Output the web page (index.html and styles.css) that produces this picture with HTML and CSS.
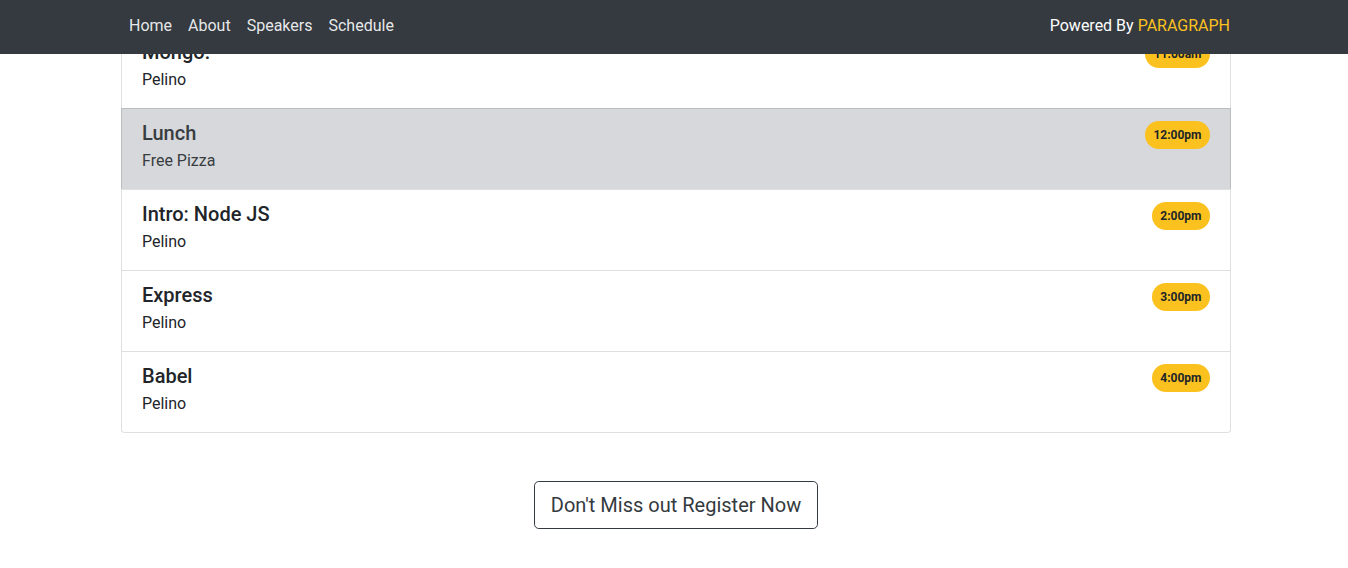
FILE: index.html
```html
<!DOCTYPE html>
<html lang="en">
<head>
<meta charset="utf-8">
<title>Schedule</title>
<link rel="stylesheet" href="styles.css">
</head>
<body>
<nav class="navbar">
  <div class="container nav-inner">
    <ul class="nav-links">
      <li><a href="#">Home</a></li>
      <li><a href="#">About</a></li>
      <li><a href="#">Speakers</a></li>
      <li><a href="#">Schedule</a></li>
    </ul>
    <span class="powered">Powered By <span class="brand">PARAGRAPH</span></span>
  </div>
</nav>
<main class="container main">
  <ul class="list-group">
    <li class="item">
      <div class="item-head"><h5>Mongo:</h5><span class="badge">11:00am</span></div>
      <p>Pelino</p>
    </li>
    <li class="item item-secondary">
      <div class="item-head"><h5>Lunch</h5><span class="badge">12:00pm</span></div>
      <p>Free Pizza</p>
    </li>
    <li class="item">
      <div class="item-head"><h5>Intro: Node JS</h5><span class="badge">2:00pm</span></div>
      <p>Pelino</p>
    </li>
    <li class="item">
      <div class="item-head"><h5>Express</h5><span class="badge">3:00pm</span></div>
      <p>Pelino</p>
    </li>
    <li class="item">
      <div class="item-head"><h5>Babel</h5><span class="badge">4:00pm</span></div>
      <p>Pelino</p>
    </li>
  </ul>
  <div class="cta">
    <a class="btn-outline" href="#">Don't Miss out Register Now</a>
  </div>
</main>
</body>
</html>
```
FILE: styles.css
```css
* { box-sizing: border-box; }
html, body { margin: 0; padding: 0; }
body {
  font-family: Roboto, "Liberation Sans", Arial, sans-serif;
  font-size: 16px;
  line-height: 1.5;
  color: #212529;
  background: #fff;
}
.container {
  width: 1110px;
  margin-left: calc(50% - 553px);
}
.navbar {
  position: fixed;
  top: 0;
  left: 0;
  right: 0;
  height: 54px;
  background: #343a40;
  z-index: 10;
}
.nav-inner {
  display: flex;
  justify-content: space-between;
  align-items: flex-start;
  padding-top: 14px;
}
.nav-links {
  list-style: none;
  margin: 0;
  padding: 0;
  display: flex;
}
.nav-links a {
  display: block;
  padding: 0 8px;
  color: rgba(255, 255, 255, 0.9);
  text-decoration: none;
}
.powered { color: #fff; padding-right: 1px; }
.brand { color: #fbc11f; }

.main { padding-top: 27px; padding-bottom: 39px; }
.list-group {
  list-style: none;
  margin: 0;
  padding: 0;
}
.item {
  padding: 12px 20px;
  margin-bottom: -1px;
  border: 1px solid rgba(0, 0, 0, 0.125);
  background: #fff;
}
.item:first-child { border-radius: 4px 4px 0 0; }
.item:last-child { border-radius: 0 0 4px 4px; margin-bottom: 0; }
.item-secondary { background: #d6d8db; color: #383d41; }
.item-head {
  display: flex;
  justify-content: space-between;
  align-items: flex-start;
}
.item h5 {
  margin: 0 0 4px;
  font-size: 20px;
  font-weight: 500;
  line-height: 24px;
}
.item p { margin: 0 0 4px; }
.badge {
  display: inline-block;
  background: #fbc11f;
  color: #212529;
  font-size: 12px;
  font-weight: 700;
  line-height: 14px;
  padding: 7px 8.5px;
  border-radius: 14px;
}
.cta {
  margin-top: 48px;
  text-align: center;
}
.btn-outline {
  display: inline-block;
  font-size: 20px;
  line-height: 30px;
  padding: 8px 16px;
  color: #343a40;
  border: 1px solid #343a40;
  border-radius: 4.8px;
  text-decoration: none;
}
```
